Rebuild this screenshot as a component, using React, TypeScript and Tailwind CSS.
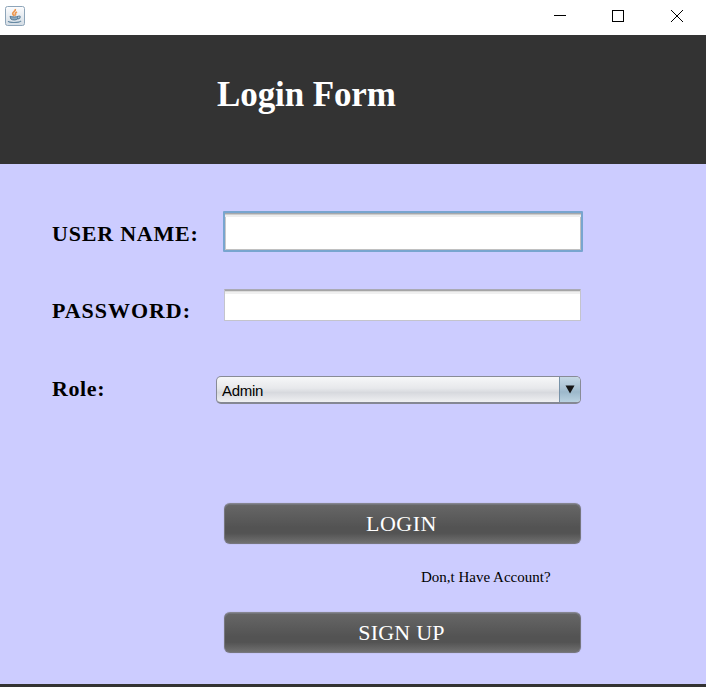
import React from "react";

const serif = "font-['Liberation_Serif','Times_New_Roman',serif]";

function JavaIcon() {
  return (
    <svg width="20" height="20" viewBox="0 0 20 20" className="block">
      <defs>
        <linearGradient id="tile" x1="0" y1="0" x2="0" y2="1">
          <stop offset="0" stopColor="#fdfdfe" />
          <stop offset="1" stopColor="#d3dce4" />
        </linearGradient>
      </defs>
      <rect x="0.5" y="0.5" width="19" height="19" rx="2" fill="url(#tile)" stroke="#8ea5b9" />
      <path d="M10.300 3c.8 2-2.800 2.900-2.600 4.700.1 1 1.100 1.500 1.500 2.300M12 6c-1.800.8-2.200 1.800-1.200 3.500" fill="none" stroke="#ec9851" strokeWidth="1.700" />
      <path d="M5 10.300c2 .9 6.500.9 8 0l-.5 2.700c-1.200 1.300-5.200 1.300-6.600 0Z" fill="#8fa9bd" stroke="#537b99" strokeWidth="1" />
      <path d="M13.200 10.300c2.800-.8 2.800 2.200-.6 2.800M3.300 15c-.3 2 10.800 2 12.800-.2" fill="none" stroke="#6689a3" strokeWidth="1.200" />
    </svg>
  );
}

function TitleBar() {
  return (
    <header className="flex h-[35px] items-start justify-between bg-white pl-[5px] pr-[22px]">
      <div className="pt-[6px]"><JavaIcon /></div>
      <div className="flex pt-[10px] text-black">
        <svg width="12" height="12" shapeRendering="crispEdges"><path d="M0 5.500H12" stroke="currentColor" /></svg>
        <svg width="12" height="12" shapeRendering="crispEdges" className="ml-[46px]"><path d="M.5.500H11.500V11.500H.5Z" fill="none" stroke="currentColor" /></svg>
        <svg width="14" height="12" className="ml-[46px]"><path d="M1 0L13 12M13 0L1 12" stroke="currentColor" strokeWidth="1" /></svg>
      </div>
    </header>
  );
}

function FormButton({ children, className }: { children: React.ReactNode; className: string }) {
  return (
    <button type="button" className={`ml-[224px] flex h-[41px] w-[357px] items-center justify-center rounded-[6px] border border-[#76767e] border-t-[#85858f] bg-[linear-gradient(#676767_0%,#535353_60%,#535353_75%,#707070_100%)] pr-[2px] pt-px text-[22px] leading-6 text-white shadow-[0_0_1px_#8f8fa8,inset_0_1px_0_#73757a] ${className}`}>
      {children}
    </button>
  );
}

export default function App() {
  return (
    <div className={`h-[687px] w-[706px] overflow-hidden bg-[#333333] text-black ${serif}`}>
      <TitleBar />
      <div className="h-[129px] pl-[217px] pt-[40px]">
        <h1 className="whitespace-nowrap text-[35px] font-bold leading-[40px] tracking-[-0.1px] text-white">Login Form</h1>
      </div>
      <main className="flex h-[520px] flex-col bg-[#ccccff] pt-[47px]">
        <div className="flex h-[41px] items-center pl-[52px]">
          <label htmlFor="user" className="w-[171px] whitespace-nowrap pt-[4px] text-[22px] font-bold leading-6 tracking-[0.8px]">USER NAME:</label>
          <input id="user" className="h-[41px] w-[360px] rounded-[1px] border-2 border-[#78a5cf] bg-white px-2 outline-none shadow-[inset_0_1px_0_#a5a8ab,inset_0_2px_0_#cdcdcd,inset_0_4px_0_#eeeeee,inset_1px_0_0_#c9c9c9,inset_-1px_-1px_0_#c0c0c0]" />
        </div>
        <div className="mt-[37px] flex h-[32px] items-center pl-[52px]">
          <label htmlFor="pass" className="w-[172px] whitespace-nowrap pt-[12px] text-[22px] font-bold leading-6 tracking-[0.95px]">PASSWORD:</label>
          <input id="pass" type="password" className="h-[32px] w-[357px] border border-[#c4c4cc] border-t-[#aaaab4] bg-white px-2 outline-none shadow-[inset_0_1px_0_#a5a5a5,inset_0_2px_0_#dddddd,inset_0_4px_0_#f0f0f0]" />
        </div>
        <div className="mt-[55px] flex h-[28px] items-center pl-[52px]">
          <span className="w-[164px] pb-[2px] text-[22px] font-bold leading-6 tracking-[0.6px]">Role:</span>
          <div className="flex h-[28px] w-[365px] overflow-hidden rounded-[5px] border border-[#888b96] border-b-2 border-b-[#858893] bg-[linear-gradient(#f6f7f8_0%,#e7e8eb_45%,#d7d9de_62%,#eff0f2_100%)]">
            <span className="flex-1 pl-[5px] pt-[3px] font-['Liberation_Sans',Arial,sans-serif] text-[15px] leading-[22px] tracking-[-0.3px]">Admin</span>
            <span className="flex w-[21px] justify-center border-l border-[#7792a8] bg-[linear-gradient(#c5d8e5,#aac2d3_45%,#9cb8cb_60%,#b9d1e0)] pt-[8px]">
              <svg width="10" height="9" viewBox="0 0 10 9"><path d="M.5.500H9.500L5 8.500Z" fill="#151515" /></svg>
            </span>
          </div>
        </div>
        <FormButton className="mt-[99px] tracking-[0.5px]">LOGIN</FormButton>
        <a className="ml-[421px] mt-[23px] block h-5 whitespace-nowrap text-[15px] leading-5">Don,t Have Account?</a>
        <FormButton className="mt-[25px] tracking-[0.2px]">SIGN UP</FormButton>
      </main>
    </div>
  );
}
